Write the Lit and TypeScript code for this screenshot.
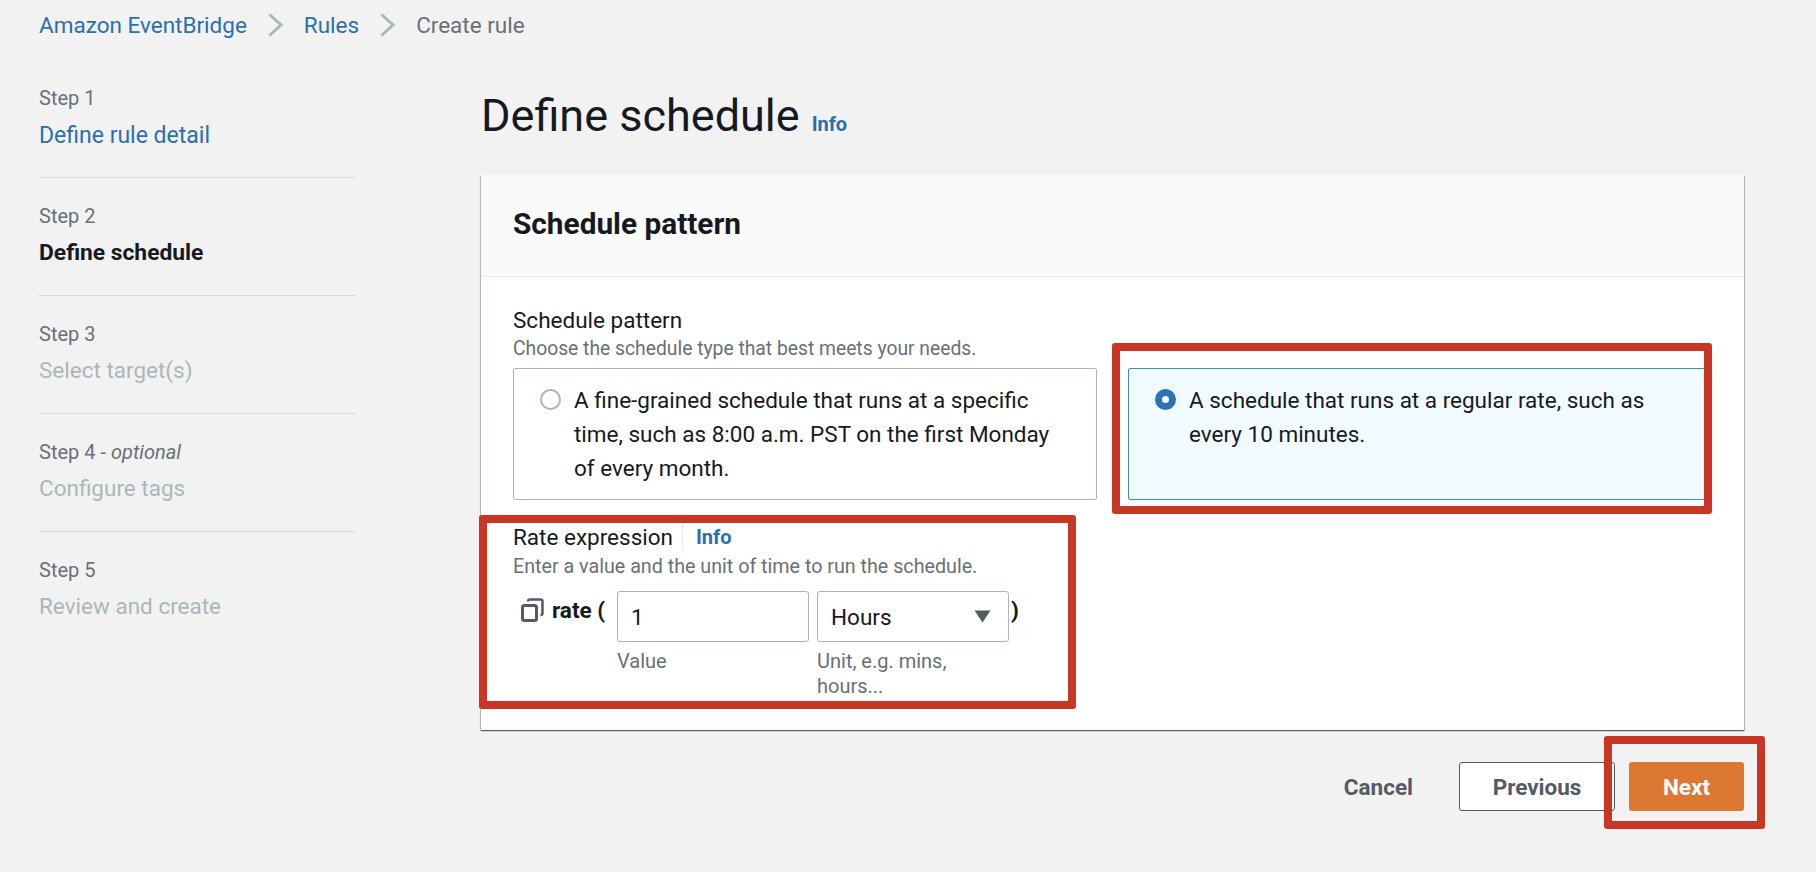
import { LitElement, html, css, svg } from 'lit';
import { customElement } from 'lit/decorators.js';

const chevron = html`<svg class="chevron" width="15" height="24" viewBox="0 0 15 24">${svg`<path d="M1.5 1.5 L13 12 L1.5 22.5" fill="none" stroke="#aab7b8" stroke-width="3"/>`}</svg>`;

const steps = [
  { n: 'Step 1', name: 'Define rule detail', kind: 'link' },
  { n: 'Step 2', name: 'Define schedule', kind: 'active' },
  { n: 'Step 3', name: 'Select target(s)', kind: 'off' },
  { n: 'Step 4', opt: 'optional', name: 'Configure tags', kind: 'off' },
  { n: 'Step 5', name: 'Review and create', kind: 'off' },
];

@customElement('app-root')
export class AppRoot extends LitElement {
  static styles = css`
    * {
      box-sizing: border-box;
    }
    :host {
      display: block;
      position: relative;
      height: 872px;
      overflow: hidden;
      background: #f2f2f3;
      color: #16191f;
      font-family: Roboto, "Open Sans", sans-serif;
      font-size: 22.5px;
    }
    a {
      color: #2b6fae;
      text-decoration: none;
    }
    .crumbs {
      display: flex;
      align-items: center;
      height: 49px;
      padding-left: 39px;
    }
    .crumbs .chevron {
      margin: 0 21px 0 21px;
    }
    .crumbs span {
      color: #687078;
    }
    .layout {
      display: flex;
      margin-top: 37px;
      padding-left: 39px;
    }
    nav {
      width: 316px;
      flex: none;
    }
    .step {
      padding: 26px 0 29px;
      border-bottom: 1px solid #d5dbdb;
    }
    .step:first-child {
      padding-top: 0;
    }
    .step:last-child {
      border-bottom: none;
    }
    .step-label {
      font-size: 20px;
      line-height: 24px;
      color: #687078;
      margin-bottom: 10px;
    }
    .step-label i {
      font-style: italic;
    }
    .step-name {
      line-height: 28px;
    }
    .step-name.link {
      margin-bottom: -4px;
      line-height: 32px;
      font-size: 23px;
    }
    .step-name.off {
      color: #aab7b8;
    }
    .step-name.active {
      margin-bottom: -2px;
      line-height: 30px;
      font-size: 22.8px;
      font-weight: 700;
    }
    main {
      width: 1263px;
      margin-left: 126px;
      flex: none;
    }
    .title {
      display: flex;
      align-items: baseline;
      gap: 12px;
      height: 89px;
      padding-top: 5px;
    }
    h1 {
      margin: 0;
      font-size: 45px;
      line-height: 50px;
      font-weight: 400;
    }
    .info {
      font-size: 20px;
      font-weight: 700;
    }
    .card {
      height: 555px;
      background: #fff;
      box-shadow: 0 1px 1px 0 rgba(0, 28, 36, 0.5), 1px 1px 1px 0 rgba(0, 28, 36, 0.2), -1px 1px 1px 0 rgba(0, 28, 36, 0.2);
    }
    .card-head {
      display: flex;
      align-items: center;
      height: 102px;
      padding: 0 32px 3px;
      background: #fafafa;
      border-bottom: 1px solid #eaeded;
    }
    h2 {
      margin: 0;
      font-size: 29.8px;
      line-height: 30px;
      font-weight: 700;
    }
    .card-body {
      padding: 29px 32px 0;
    }
    .label {
      line-height: 28px;
    }
    .desc {
      margin-top: 3px;
      font-size: 19.3px;
      line-height: 24px;
      color: #687078;
    }
    .tiles {
      display: grid;
      grid-template-columns: 584px 584px;
      gap: 31px;
      margin-top: 7px;
    }
    .tile {
      display: flex;
      height: 132px;
      padding: 14px 30px 0 26px;
      border: 1px solid #aab7b8;
      border-radius: 2px;
      line-height: 34px;
    }
    .tile.on {
      border-color: #3f8fa8;
      background: #f1faff;
    }
    .radio {
      width: 21px;
      height: 21px;
      flex: none;
      margin: 6px 13px 0 0;
      border: 2px solid #aab7b8;
      border-radius: 50%;
      background: #fff;
    }
    .tile.on .radio {
      border: 7px solid #2b73b7;
    }
    .rate-head {
      display: flex;
      align-items: center;
      margin-top: 23px;
      height: 28px;
    }
    .rate-head a {
      margin-left: 9px;
      padding-left: 13px;
      border-left: 1px solid #eaeded;
      line-height: 28px;
    }
    .desc.rate-desc {
      margin-top: 4px;
      font-size: 19.7px;
    }
    .rate-row {
      display: flex;
      margin-top: 12px;
    }
    .rate-lead {
      display: flex;
      align-items: center;
      gap: 8px;
      width: 104px;
      height: 38px;
      padding-left: 8px;
      font-weight: 700;
    }
    .rate-col {
      width: 192px;
      margin-right: 8px;
    }
    .box {
      display: flex;
      align-items: center;
      justify-content: space-between;
      height: 51px;
      padding: 0 17px 0 13px;
      background: #fff;
      border: 1px solid #aab7b8;
      border-radius: 3px;
    }
    .hint {
      margin-top: 7px;
      padding-right: 30px;
      font-size: 20px;
      line-height: 25px;
      color: #687078;
    }
    .close {
      margin-left: -6px;
      height: 38px;
      line-height: 38px;
      font-weight: 700;
    }
    .actions {
      display: flex;
      align-items: center;
      justify-content: flex-end;
      margin-top: 32px;
      font-weight: 700;
      color: #545b64;
    }
    .cancel {
      margin-right: 46px;
    }
    .btn {
      display: flex;
      align-items: center;
      justify-content: center;
      height: 49px;
      border-radius: 3px;
    }
    .btn.prev {
      width: 156px;
      background: #fff;
      border: 1px solid #545b64;
    }
    .btn.next {
      width: 115px;
      margin-left: 14px;
      background: #dd7832;
      color: #fff;
    }
    /* annotation boxes drawn over the screenshot */
    .mark {
      position: absolute;
      border: 8px solid #c93626;
      border-radius: 3px;
      pointer-events: none;
    }
    .mark.tile-mark {
      left: 1112px;
      top: 343px;
      width: 600px;
      height: 171px;
    }
    .mark.rate-mark {
      left: 479px;
      top: 515px;
      width: 597px;
      height: 194px;
    }
    .mark.next-mark {
      left: 1604px;
      top: 736px;
      width: 161px;
      height: 93px;
    }
  `;

  render() {
    return html`
      <div class="crumbs">
        <a href="#">Amazon EventBridge</a>${chevron}
        <a href="#">Rules</a>${chevron}
        <span>Create rule</span>
      </div>
      <div class="layout">
        <nav>
          ${steps.map(s => html`
            <div class="step">
              <div class="step-label">${s.n}${s.opt ? html` - <i>${s.opt}</i>` : ''}</div>
              <div class="step-name ${s.kind}">${s.kind === 'link' ? html`<a href="#">${s.name}</a>` : s.name}</div>
            </div>
          `)}
        </nav>
        <main>
          <div class="title">
            <h1>Define schedule</h1>
            <a class="info" href="#">Info</a>
          </div>
          <section class="card">
            <div class="card-head"><h2>Schedule pattern</h2></div>
            <div class="card-body">
              <div class="label">Schedule pattern</div>
              <div class="desc">Choose the schedule type that best meets your needs.</div>
              <div class="tiles">
                <div class="tile">
                  <div class="radio"></div>
                  <div>A fine-grained schedule that runs at a specific time, such as 8:00 a.m. PST on the first Monday of every month.</div>
                </div>
                <div class="tile on">
                  <div class="radio"></div>
                  <div>A schedule that runs at a regular rate, such as every 10 minutes.</div>
                </div>
              </div>
              <div class="rate-head">
                <span>Rate expression</span>
                <a class="info" href="#">Info</a>
              </div>
              <div class="desc rate-desc">Enter a value and the unit of time to run the schedule.</div>
              <div class="rate-row">
                <div class="rate-lead">
                  <svg width="23" height="24" viewBox="0 0 23 24">
                    <rect x="1.5" y="7.5" width="14" height="15" rx="2" fill="none" stroke="#545b64" stroke-width="3"/>
                    <path d="M7 3.5 Q7 1.5 9 1.5 H19.5 Q21.5 1.5 21.5 3.5 V15 Q21.5 17 19.5 17" fill="none" stroke="#545b64" stroke-width="2.5"/>
                  </svg>
                  <span>rate (</span>
                </div>
                <div class="rate-col">
                  <div class="box">1</div>
                  <div class="hint">Value</div>
                </div>
                <div class="rate-col">
                  <div class="box">
                    <span>Hours</span>
                    <svg width="17" height="13" viewBox="0 0 17 13"><path d="M0.5 0.5 H16.5 L8.5 12.5 Z" fill="#545b64"/></svg>
                  </div>
                  <div class="hint">Unit, e.g. mins, hours...</div>
                </div>
                <div class="close">)</div>
              </div>
            </div>
          </section>
          <div class="actions">
            <span class="cancel">Cancel</span>
            <div class="btn prev">Previous</div>
            <div class="btn next">Next</div>
          </div>
        </main>
      </div>
      <div class="mark tile-mark"></div>
      <div class="mark rate-mark"></div>
      <div class="mark next-mark"></div>
    `;
  }
}
